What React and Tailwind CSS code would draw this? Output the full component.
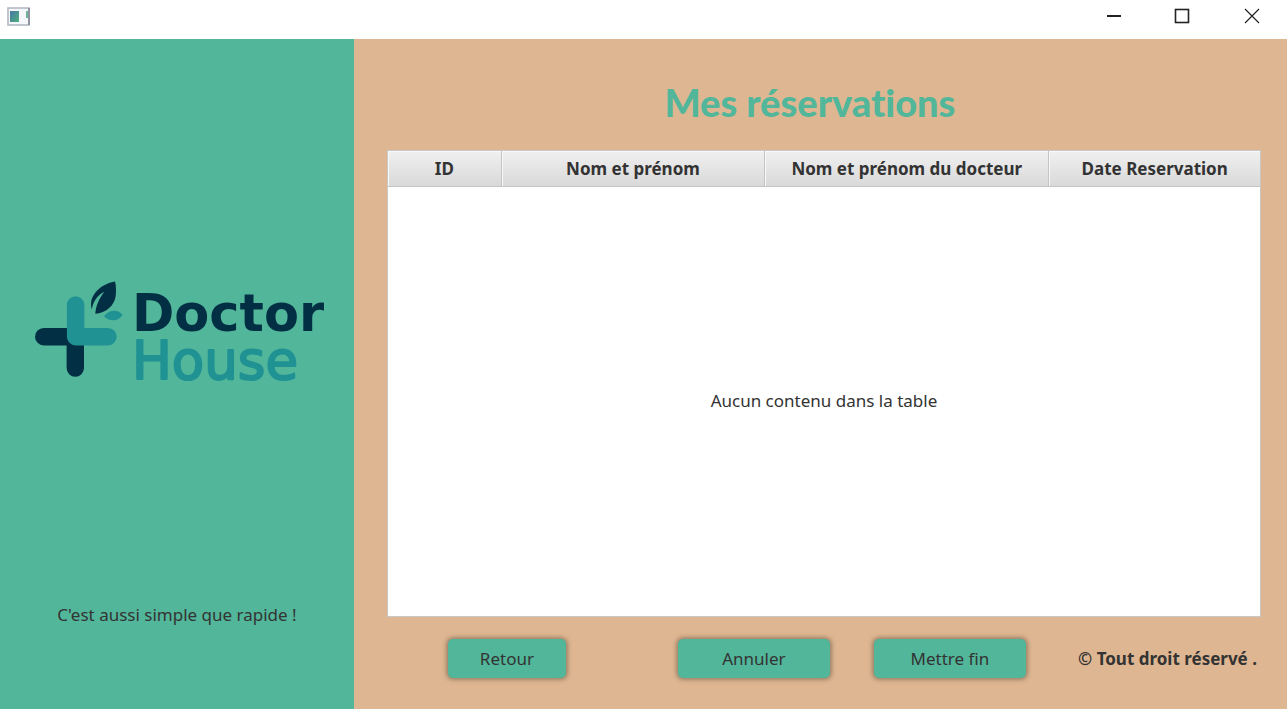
const columns = ['ID', 'Nom et prénom', 'Nom et prénom du docteur', 'Date Reservation'];

function AppIcon() {
  return (
    <svg width="24" height="19" viewBox="0 0 24 19" aria-hidden="true">
      <defs>
        <linearGradient id="tile" x1="0" y1="0" x2="1" y2="1">
          <stop offset="0" stopColor="#4a78a8" />
          <stop offset="1" stopColor="#4fae7c" />
        </linearGradient>
      </defs>
      <rect x="2" y="1" width="21" height="17" fill="#f6f7fa" stroke="#b4b8c2" strokeWidth="1.6" />
      <path d="M23 1v17" stroke="#9094a0" strokeWidth="2" />
      <rect x="4" y="4" width="9" height="11" fill="url(#tile)" />
      <rect x="20" y="4" width="2" height="7" fill="#6fb39a" />
    </svg>
  );
}

function TitleBar() {
  return (
    <header className="flex h-[39px] shrink-0 items-start justify-between bg-white pl-1.5 text-[#222]">
      <div className="pt-[7px]">
        <AppIcon />
      </div>
      <div className="flex h-8">
        <button type="button" aria-label="Réduire" className="flex w-[68px] items-center justify-center">
          <svg width="16" height="16" viewBox="0 0 16 16">
            <path d="M1 8h14" stroke="currentColor" strokeWidth="2" />
          </svg>
        </button>
        <button type="button" aria-label="Agrandir" className="flex w-[68px] items-center justify-center">
          <svg width="16" height="16" viewBox="0 0 16 16">
            <rect x="1.5" y="1.5" width="13" height="13" fill="none" stroke="currentColor" strokeWidth="1.6" />
          </svg>
        </button>
        <button type="button" aria-label="Fermer" className="flex w-[71px] items-center justify-center">
          <svg width="16" height="16" viewBox="0 0 16 16">
            <path d="M1 1l14 14M15 1L1 15" stroke="currentColor" strokeWidth="1.2" />
          </svg>
        </button>
      </div>
    </header>
  );
}

function Logo() {
  return (
    <svg className="w-[300px] max-w-full" viewBox="0 0 300 120" role="img" aria-label="Doctor House">
      <g strokeLinecap="round" fill="none" strokeWidth="17.4">
        <path d="M13.7 60.7H50M45.3 60V92" stroke="#022f44" />
        <path d="M45.6 29V60.7H78" stroke="#209293" strokeLinejoin="round" />
      </g>
      <path
        d="M85 5.400C73 7.500 62 16 61.100 27C60.900 29.500 61.200 31.500 61.800 33.500C63 26 67 19.500 74.300 15.800C69.500 22 65.800 29.500 65.300 37.800C76 36.800 84 30 85.600 20.500C86.300 15.500 86.200 10 85 5.400Z"
        fill="#022f44"
      />
      <path d="M74 40.200C79 33.500 88 33 92.600 38.800C88.500 45.800 79 46 74 40.200Z" fill="#209293" />
      <g fontFamily="'DejaVu Sans', sans-serif" strokeLinejoin="round">
        <text x="102" y="55" fontSize="51" fontWeight="700" fill="#022f44">Doctor</text>
        <text x="102" y="103" fontSize="53" fill="#209293" stroke="#209293" strokeWidth="2">House</text>
      </g>
    </svg>
  );
}

function ActionButton({ children, className }) {
  return (
    <button
      type="button"
      className={`h-[39px] rounded-[5px] bg-[#52b69a] text-[17px] text-[#333] shadow-[0_0_5px_1px_rgba(60,50,40,0.55)] ${className}`}
    >
      {children}
    </button>
  );
}

export default function App() {
  return (
    <div className="flex min-h-screen flex-col bg-white pb-0.5 font-['Noto_Sans',sans-serif] text-[#333]">
      <TitleBar />
      <div className="flex grow">
        <aside className="flex w-[27.5%] shrink-0 flex-col items-center bg-[#52b69a] pb-20">
          <div className="flex grow items-center pt-8 pl-1.5">
            <Logo />
          </div>
          <p className="font-['Comic_Sans_MS','Noto_Sans',sans-serif] text-[17px] leading-7">
            C'est aussi simple que rapide !
          </p>
        </aside>
        <main className="flex grow flex-col bg-[#deb691] pr-[26px] pb-[31px] pl-[33px]">
          <h1 className="pt-[39px] pr-7 pb-6 text-center font-[Lato,sans-serif] text-[38px] leading-12 font-black text-[#52b69a] [font-variant-ligatures:none]">
            Mes réservations
          </h1>
          <div className="flex grow border border-[#c8c8c8] bg-white">
            <table className="w-full table-fixed border-collapse">
              <colgroup>
                <col className="w-[13%]" />
                <col className="w-[30.2%]" />
                <col className="w-[32.6%]" />
                <col className="w-[24.2%]" />
              </colgroup>
              <thead>
                <tr className="h-[35px]">
                  {columns.map((name) => (
                    <th
                      key={name}
                      scope="col"
                      className="border-r border-b border-[#c4c4c4] bg-linear-to-b from-[#f0f0f0] to-[#d9d9d9] pt-0.5 text-[17px] leading-6 font-bold whitespace-nowrap shadow-[inset_1px_1px_0_#f8f8f8] last:border-r-0"
                    >
                      {name}
                    </th>
                  ))}
                </tr>
              </thead>
              <tbody>
                <tr>
                  <td colSpan={4} className="text-center text-[17px] leading-6">
                    Aucun contenu dans la table
                  </td>
                </tr>
              </tbody>
            </table>
          </div>
          <div className="flex items-center pt-[22px] pl-[61px]">
            <ActionButton className="w-[118px]">Retour</ActionButton>
            <ActionButton className="ml-28 w-[152px]">Annuler</ActionButton>
            <ActionButton className="ml-11 w-[152px]">Mettre fin</ActionButton>
            <p className="ml-auto pr-1 text-[17px] leading-6 font-bold whitespace-nowrap">© Tout droit réservé .</p>
          </div>
        </main>
      </div>
    </div>
  );
}
